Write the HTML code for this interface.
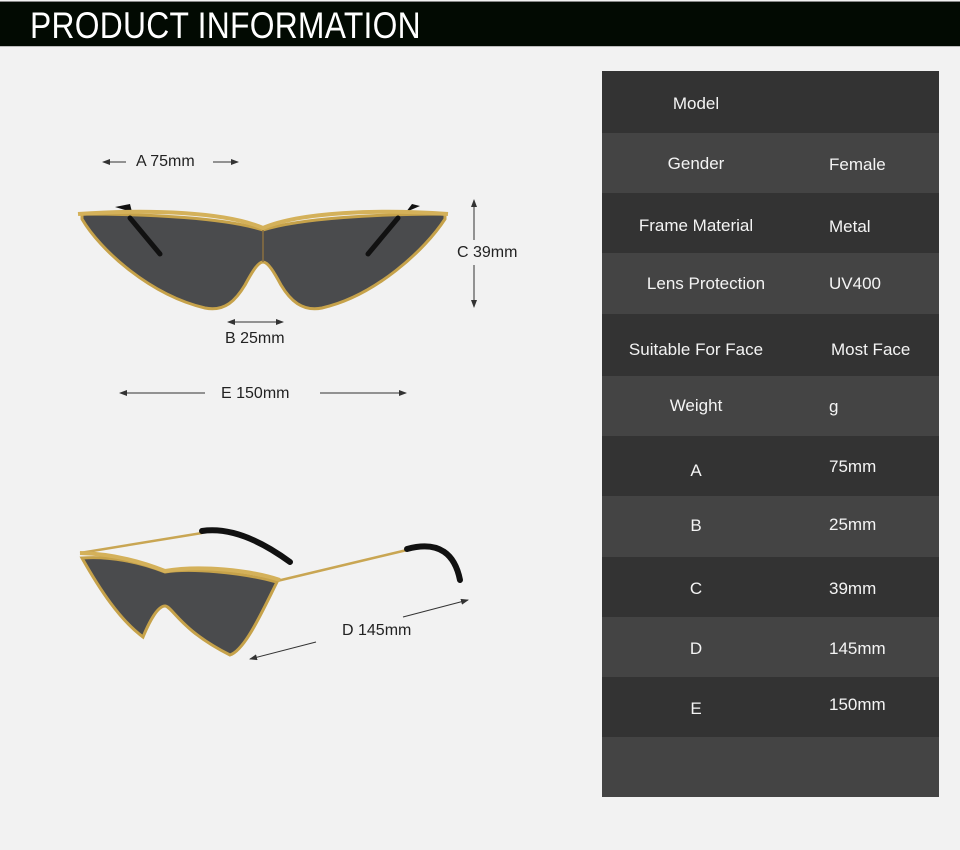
<!DOCTYPE html>
<html><head><meta charset="utf-8"><style>
html,body{margin:0;padding:0}
body{width:960px;height:850px;background:#f2f2f2;position:relative;overflow:hidden;font-family:"Liberation Sans",Arial,sans-serif}
.hdr{position:absolute;left:0;top:1px;width:960px;height:46px;background:#020a02;border-top:1px solid #888;border-bottom:1px solid #bbb;box-sizing:border-box}
.hdr span{position:absolute;left:30px;top:3px;font-size:37px;color:#fff;font-weight:300;letter-spacing:0.3px;transform:scaleX(0.86);transform-origin:left}
.tbl{position:absolute;left:602px;top:71px;width:337px}
.r{position:relative;height:60.5px;color:#f4f4f4;font-size:17px}
.r:nth-child(odd){background:#333}.r:nth-child(even){background:#444}
.r .a{position:absolute;left:0;width:188px;text-align:center}
.r .b{position:absolute;left:227px}
.lbl{position:absolute;font-size:16px;color:#222}
</style></head><body>
<div class="hdr"><span>PRODUCT INFORMATION</span></div>

<div class="tbl">
<div class="r" style="height:62px"><span class="a" style="top:23px">Model</span></div>
<div class="r" style="height:60px"><span class="a" style="top:21px">Gender</span><span class="b" style="top:22px">Female</span></div>
<div class="r" style="height:60px"><span class="a" style="top:23px">Frame Material</span><span class="b" style="top:24px">Metal</span></div>
<div class="r" style="height:61px"><span class="a" style="top:21px;left:10px">Lens Protection</span><span class="b" style="top:21px">UV400</span></div>
<div class="r" style="height:62px"><span class="a" style="top:26px">Suitable For Face</span><span class="b" style="top:26px;left:229px">Most Face</span></div>
<div class="r" style="height:60px"><span class="a" style="top:20px">Weight</span><span class="b" style="top:21px">g</span></div>
<div class="r" style="height:60px"><span class="a" style="top:25px">A</span><span class="b" style="top:21px">75mm</span></div>
<div class="r" style="height:61px"><span class="a" style="top:20px">B</span><span class="b" style="top:19px">25mm</span></div>
<div class="r" style="height:60px"><span class="a" style="top:22px">C</span><span class="b" style="top:22px">39mm</span></div>
<div class="r" style="height:60px"><span class="a" style="top:22px">D</span><span class="b" style="top:22px">145mm</span></div>
<div class="r" style="height:60px"><span class="a" style="top:22px">E</span><span class="b" style="top:18px">150mm</span></div>
<div class="r" style="height:60px"></div>
</div>

<svg width="600" height="850" style="position:absolute;left:0;top:0" xmlns="http://www.w3.org/2000/svg">
<defs><marker id="ah" markerWidth="8" markerHeight="6" refX="7" refY="3" orient="auto"><path d="M0,0 L8,3 L0,6" fill="#333"/></marker></defs>
<g stroke="#333" stroke-width="1" fill="none">
<line x1="126" y1="162" x2="103" y2="162" marker-end="url(#ah)"/>
<line x1="213" y1="162" x2="238" y2="162" marker-end="url(#ah)"/>
<line x1="474" y1="240" x2="474" y2="200" marker-end="url(#ah)"/>
<line x1="474" y1="265" x2="474" y2="307" marker-end="url(#ah)"/>
<line x1="248" y1="322" x2="228" y2="322" marker-end="url(#ah)"/>
<line x1="248" y1="322" x2="283" y2="322" marker-end="url(#ah)"/>
<line x1="205" y1="393" x2="120" y2="393" marker-end="url(#ah)"/>
<line x1="320" y1="393" x2="406" y2="393" marker-end="url(#ah)"/>
<line x1="403" y1="617" x2="468" y2="600" marker-end="url(#ah)"/>
<line x1="316" y1="642" x2="250" y2="659" marker-end="url(#ah)"/>
</g>
<path d="M115,207 L130,204 L132,212 Z" fill="#111"/>
<path d="M406,212 L412,204 L420,206 Z" fill="#111"/>
<path d="M82,219 C100,250 150,295 205,308 C225,312 236,300 245,285 C252,272 258,262 263,262 C268,262 274,272 281,285 C290,300 302,312 322,308 C375,296 425,250 445,219 L445,214 C380,214 300,218 263,230 C226,218 150,214 82,214 Z" fill="#4a4b4d" stroke="#c6a24a" stroke-width="3"/>
<path d="M78,214 C150,209 226,212 263,228 C300,212 380,209 448,214" stroke="#d4b15a" stroke-width="4" fill="none"/>
<line x1="263" y1="230" x2="263" y2="262" stroke="#8a7040" stroke-width="1.5"/>
<path d="M130,218 L160,254" stroke="#111" stroke-width="5" stroke-linecap="round"/>
<path d="M398,218 L368,254" stroke="#111" stroke-width="5" stroke-linecap="round"/>
<path d="M80,553 L202,533" stroke="#c9a653" stroke-width="2.5"/>
<path d="M202,531 C230,527 260,540 290,562" stroke="#111" stroke-width="6" stroke-linecap="round" fill="none"/>
<path d="M277,581 L407,550" stroke="#c9a653" stroke-width="2.5"/>
<path d="M407,549 C440,540 455,555 460,580" stroke="#111" stroke-width="6" stroke-linecap="round" fill="none"/>
<path d="M82,558 C100,590 120,620 143,637 C150,620 158,606 165,606 C172,606 180,630 230,655 C245,650 262,612 277,582 C240,572 190,568 165,572 C140,562 110,556 82,558 Z" fill="#4a4b4d" stroke="#c6a24a" stroke-width="3"/>
<path d="M80,553 C120,554 150,565 165,571 C200,565 250,570 280,580" stroke="#d4b15a" stroke-width="4" fill="none"/>
</svg>

<div class="lbl" style="left:136px;top:153px">A 75mm</div>
<div class="lbl" style="left:457px;top:244px">C 39mm</div>
<div class="lbl" style="left:225px;top:330px">B 25mm</div>
<div class="lbl" style="left:221px;top:385px">E 150mm</div>
<div class="lbl" style="left:342px;top:622px">D 145mm</div>
</body></html>
